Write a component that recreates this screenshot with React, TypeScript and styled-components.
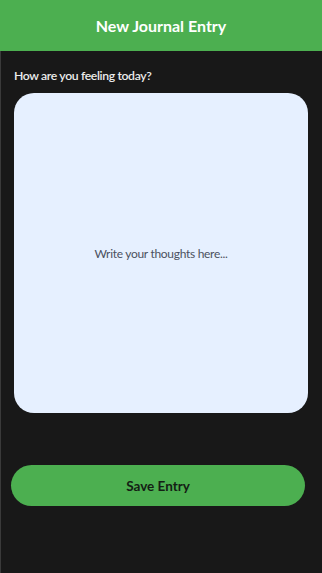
import styled, { createGlobalStyle } from "styled-components";

const Global = createGlobalStyle`
  html, body {
    margin: 0;
    padding: 0;
    background: #181818;
  }
  * { box-sizing: border-box; }
`;

const Screen = styled.div`
  width: 322px;
  height: 573px;
  display: flex;
  flex-direction: column;
  background: #181818;
  font-family: Lato, "Noto Sans", sans-serif;
  overflow: hidden;
`;

const Header = styled.header`
  height: 51px;
  background: #4caf50;
  display: flex;
  align-items: center;
  justify-content: center;
  color: #fff;
  font-weight: 700;
  font-size: 16px;
`;

const Body = styled.main`
  flex: 1;
  border-left: 1px solid #3a3a3a;
  padding: 17px 0 0 13px;
  display: flex;
  flex-direction: column;
`;

const Label = styled.label`
  color: #ececec;
  font-size: 12.2px;
  font-weight: 600;
  letter-spacing: -0.35px;
  line-height: 16px;
  height: 25px;
`;

const Entry = styled.div`
  width: 294px;
  height: 320px;
  border-radius: 20px;
  background: #e6f0ff;
  display: flex;
  align-items: center;
  justify-content: center;
  color: #4b5060;
  font-size: 12px;
  letter-spacing: -0.3px;
`;

const SaveButton = styled.button`
  margin: 52px 0 0 -3px;
  width: 294px;
  height: 41px;
  border: none;
  border-radius: 21px;
  background: #4caf50;
  color: #142014;
  font-family: inherit;
  font-size: 13.5px;
  font-weight: 700;
`;

export default function App() {
  return (
    <Screen>
      <Global />
      <Header>New Journal Entry</Header>
      <Body>
        <Label>How are you feeling today?</Label>
        <Entry>Write your thoughts here...</Entry>
        <SaveButton>Save Entry</SaveButton>
      </Body>
    </Screen>
  );
}
